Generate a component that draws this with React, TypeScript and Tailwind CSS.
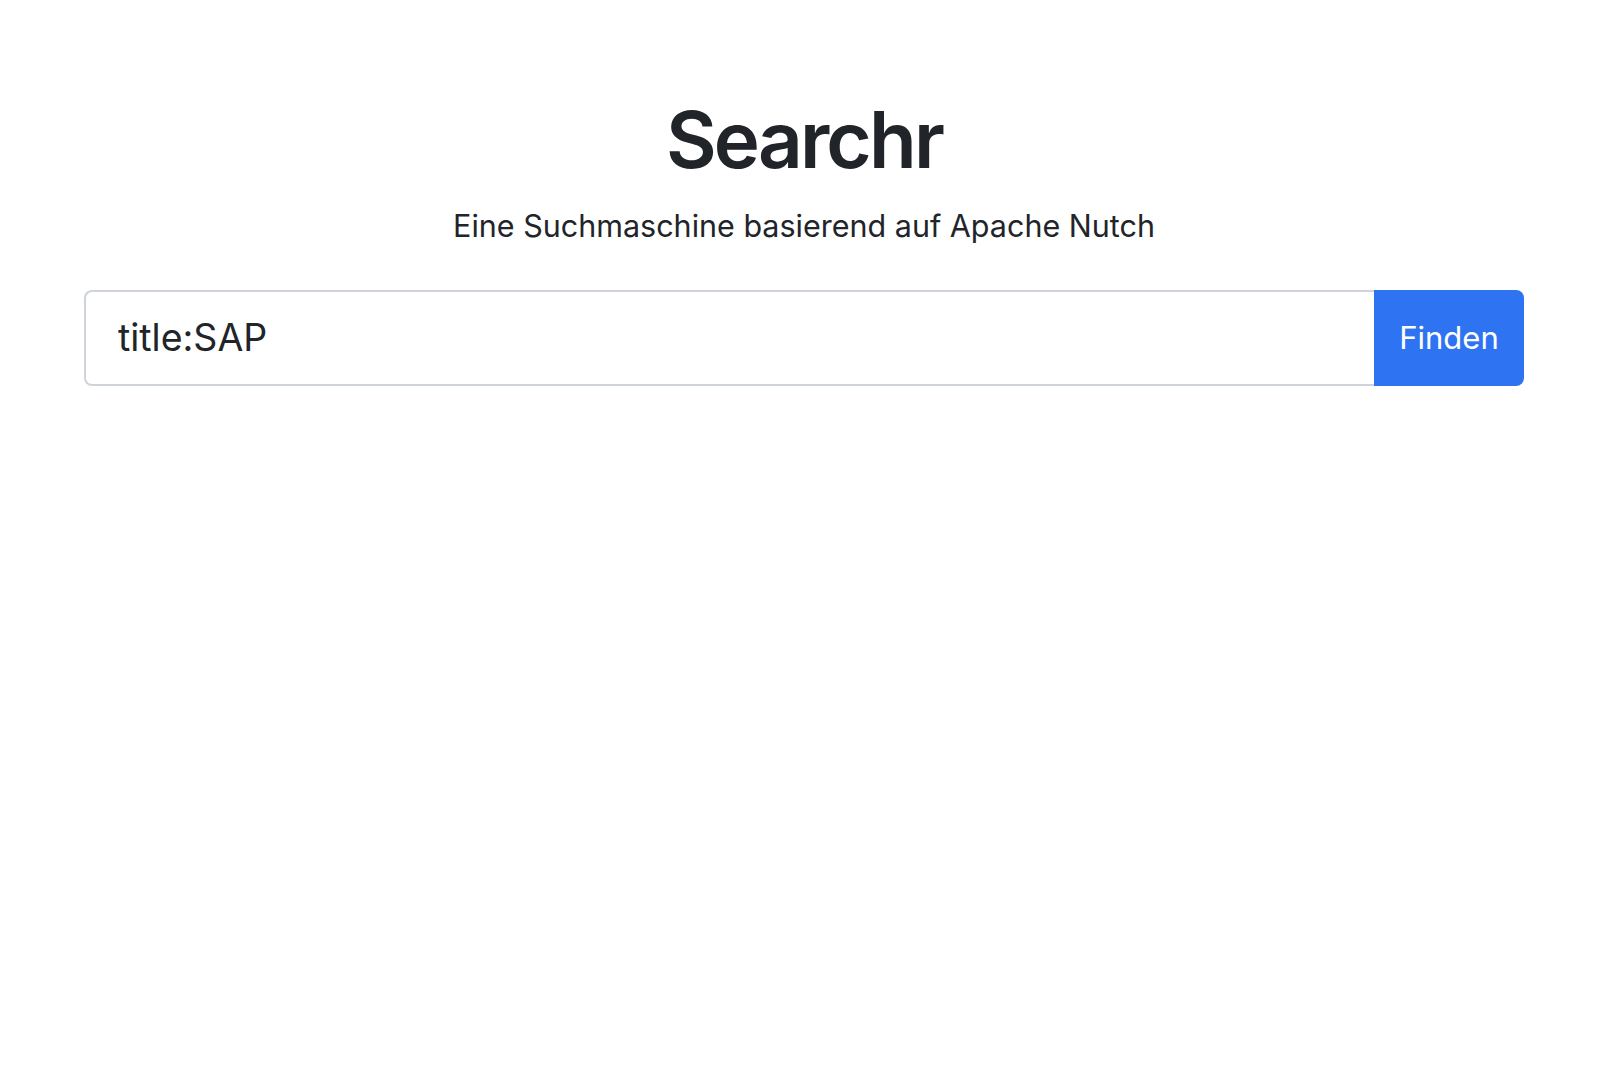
import React, { useState } from 'react';

const App = () => {
  const [query, setQuery] = useState('title:SAP');

  return (
    <div className="min-h-screen bg-white text-[#212529] font-['Inter','Helvetica_Neue',Arial,sans-serif]">
      <main className="pl-[84px] pr-[92px] pt-[92px]">
        <div className="text-center">
          <h1 className="text-[78px] leading-[95px] font-semibold tracking-[-2.8px]">Searchr</h1>
          <p className="mt-[17px] text-[30.5px] leading-[44px]">Eine Suchmaschine basierend auf Apache Nutch</p>
        </div>

        <form className="mt-[42px] flex h-[96px]" onSubmit={(e) => e.preventDefault()}>
          <input
            value={query}
            onChange={(e) => setQuery(e.target.value)}
            className="flex-1 min-w-0 border-2 border-r-0 border-[#ced4da] rounded-l-[8px] pl-[32px] pr-[24px] text-[37.5px] text-[#212529] outline-none"
          />
          <button
            type="submit"
            className="w-[150px] rounded-r-[8px] bg-[#2e73f2] text-white text-[31px]"
          >
            Finden
          </button>
        </form>
      </main>
    </div>
  );
};

export default App;
